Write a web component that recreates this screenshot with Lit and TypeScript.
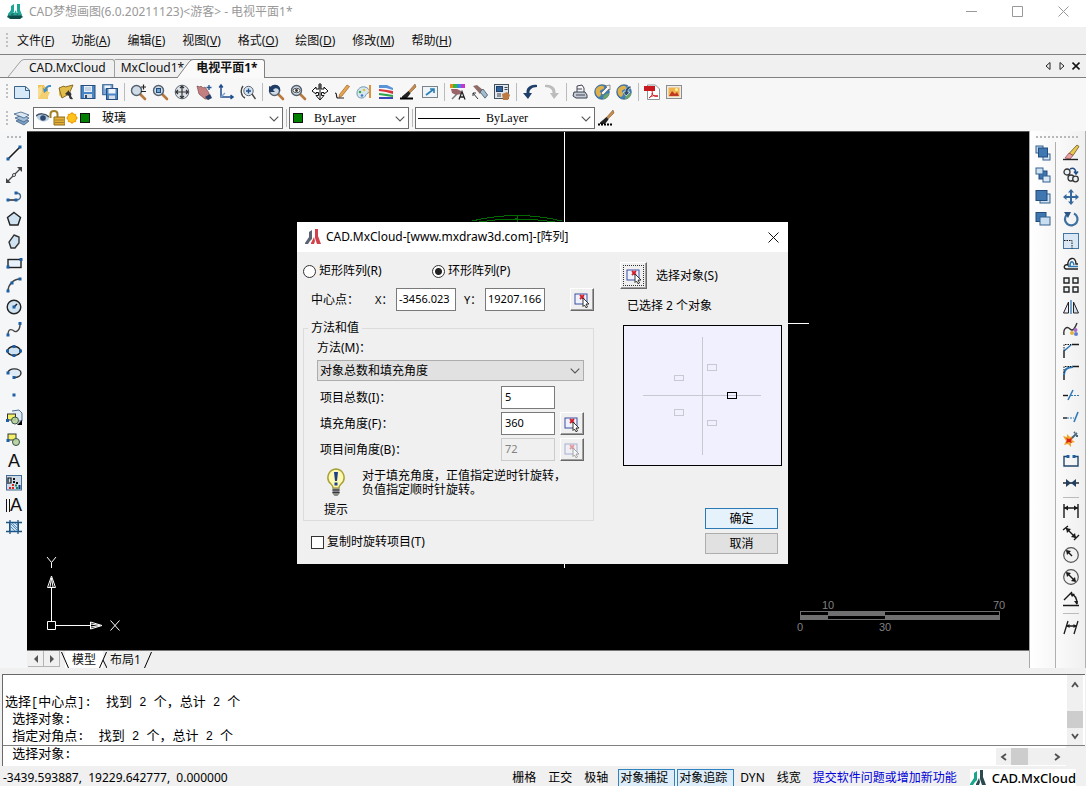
import { LitElement, html, svg, css } from "lit";
import { customElement } from "lit/decorators.js";

const B = "#1f4e8c";
const K = "#1a1a1a";
const box = (x: number, y: number, w: number, h: number, f: string, s = "#33608f") =>
  svg`<rect x=${x} y=${y} width=${w} height=${h} fill=${f} stroke=${s}/>`;
const line = (d: string, c = K, w = 1.4) => svg`<path d=${d} fill="none" stroke=${c} stroke-width=${w}/>`;
const fill = (d: string, c: string) => svg`<path d=${d} fill=${c}/>`;
const dot = (x: number, y: number) => svg`<rect x=${x - 1.5} y=${y - 1.5} width="3" height="3" fill="#1f5fa5"/>`;
const lens = (inner: unknown) => svg`
  <path d="M10.500 10.500L15 15" stroke="#b8793f" stroke-width="2.6" stroke-linecap="round"/>
  <circle cx="6.500" cy="6.500" r="5" fill="#cfdbe6" stroke="#54606c" stroke-width="1.4"/>${inner}`;
const brush = svg`<path d="M15 0L8 8l1.500 1.500L16 3z" fill="#c98a4b" stroke="#6b4a2a" stroke-width=".5"/>
  <path d="M8.500 7L2 12.500V14h5l3.500-4.500z" fill="#222"/>`;
const globe = svg`<circle cx="8" cy="8" r="7.300" fill="#3f7fb5" stroke="#2f5878" stroke-width=".7"/>
  <path d="M2 5c3-4 7-4 8-2 1 3-5 2-4 5 2 1 1 4-1 5-3-1-4-5-3-8z" fill="#e0b04a"/>
  <path d="M9 15c0-4 3-5 6-6 0 3-2 6-6 6z" fill="#6ba568"/>`;

const icons: Record<string, unknown> = {
  new: svg`<path d="M.5 2.500h11l4 3.500v8.500H.5z" fill="#d7e9f6" stroke="#3c6486"/>${line("M11.500 2.500v4h4", "#3c6486", 1)}`,
  open: svg`${fill("M2 1h6l1 2h3v12H2z", "#efc35a")}${fill("M2 4l4-2v10l-4 3z", "#f8dd91")}${fill("M6 8h8l-3 7H2z", "#f3cf72")}
    <path d="M15 1c-4 0-6 2-6 4L7 4l1 5 4-3-1-1c1-2 2-2 4-2z" fill="#3f8fca"/>`,
  saveas: svg`${fill("M1 4l5-2 1 1 8-2-4 9-7 4-3-3z", "#e2bd4b")}${line("M1 4l5-2 1 1 8-2-4 9-7 4z", "#8a6c25", 1)}
    <path d="M7 10l4-4v2c2 0 3 2 2 4l2 3c-3 1-4-1-4-3z" fill="#353535"/>`,
  save: svg`${box(1, 1.5, 14, 13, "#4a86c4", "#274e7d")}<rect x="4" y="2" width="8" height="6" fill="#e8f1fa"/>
    <path d="M5 4h6M5 6h6" stroke="#8fa9c4" stroke-width=".8"/><rect x="4" y="10" width="8" height="4" fill="#d9dee4"/><rect x="5" y="11" width="2" height="3" fill="#274e7d"/>`,
  saveall: svg`${box(.7, .7, 10, 10, "#7fa9d4", "#33608f")}<rect x="2.500" y="1.500" width="6" height="3" fill="#eef4fa"/>${box(4.5, 4.5, 11, 11, "#4a86c4", "#274e7d")}
    <rect x="6.500" y="5" width="7" height="4.500" fill="#eef4fa"/><rect x="7" y="11.500" width="6" height="3.500" fill="#d9dee4"/>`,
  zoompm: lens(line("M11 3h5M13.500 .5v5M11 7.500h5", "#222", 1.2)),
  zoomwin: lens(box(4.5, 4.5, 4, 4, "#6fa3d1", "#214b7a")),
  zoomext: svg`<circle cx="8" cy="8" r="6.800" fill="#dfe4ea" stroke="#596470"/>${line("M8 2v12M2 8h12M6 4l2-2 2 2M6 12l2 2 2-2M4 6L2 8l2 2M12 6l2 2-2 2", "#333", 1.2)}`,
  pan: svg`<path d="M1 2l3 1 1-1 2 2 2-1 4 6v6H9L3 10z" fill="#c47f80" stroke="#7b4a4c" stroke-width=".7"/><path d="M9 13l5-3 2 4-4 2z" fill="#263f66"/>${line("M10.500 3.500h5M13 1v5", "#28598f", 1.4)}`,
  ucs: svg`${line("M3 1v12h12M1.200 3.500L3 1l1.800 2.500M12.500 11.200L15 13l-2.500 1.800", B, 1.5)}${line("M3 13l4-4", "#7ca4cc")}`,
  orbit: svg`<circle cx="8.500" cy="7" r="4.700" fill="#d6e4ef" stroke="#596470"/>${line("M8.500 4.500v5M6 7h5", B, 1.4)}${line("M3 2C0 6 1 12 5 14M12 10l3.500 5", "#444")}`,
  zoomprev: svg`${lens("")}<path d="M1 2v6h6L5 6c2-3 6-2 7 2 2-6-5-10-9-5z" fill="#1f3d66"/>`,
  zoomrt: lens(svg`<ellipse cx="6.500" cy="6.500" rx="3.500" ry="2.200" fill="#fff" stroke="#333" stroke-width=".8"/><circle cx="6.500" cy="6.500" r="1.400" fill="#333"/>`),
  move4: svg`<path d="M7 0h2v5h3V3l4 4-4 3V8.500H9.500v3H12L8 16l-4-4.500h2.500v-3H4V10L0 7l4-4v2h3z" fill="#fff" stroke="#111"/>${line("M8 1v14", "#111", 1)}`,
  pencil: svg`<path d="M13 1l2.500 1.500L8 12l-3 1.500.5-3z" fill="#e4a94d" stroke="#a35c26" stroke-width=".7"/>${line("M1 9c3 0 0 5 3 5h6", "#222", 1.2)}`,
  palette: svg`<path d="M1 9c0-4 4-7 8-6s6 5 3 6-2 5-6 5-5-2-5-5z" fill="#d8e6f0" stroke="#7195b0"/><circle cx="4" cy="8" r="1.300" fill="#3cab4f"/><circle cx="8" cy="6" r="1.300" fill="#e0c23c"/><circle cx="6" cy="11.500" r="1.300" fill="#3f78c8"/><path d="M14 1v13" stroke="#dc9337" stroke-width="2"/>`,
  layers3: svg`${fill("M1 1l8 0 6 3v2L8 4H1z", "#5a94d8")}${fill("M1 5l8 1 6 1v3l-7-2-7-1z", "#d8343a")}${fill("M1 9l8 1 6 1v2l-7-1-7-1z", "#2da54c")}${fill("M1 13h14v2H1z", "#3c48b8")}`,
  brushline: svg`${brush}<path d="M0 14.500h13" stroke="#000" stroke-width="2"/>`,
  brushdash: svg`${brush}<path d="M0 14.500h15" stroke="#000" stroke-width="2" stroke-dasharray="2 1"/>`,
  resize: svg`${box(.5, 2.5, 15, 11, "#eef4f8", "#78838c")}${line("M4 11l8-6M8 5h4v4", "#2c7fb4", 1.6)}`,
  quick: svg`${fill("M0 0h3v4H0z", "#e82")}${fill("M3 0h4v4H3z", "#3b3")}${fill("M7 0h4v4H7z", "#38e")}${fill("M11 0h4v4h-4z", "#c3c")}
    ${fill("M1 5h6l4 2v3l-5 1-4-2z", "#9a6468")}${line("M2 15l5-5", "#777", 1.5)}<path d="M9 15.500l3-8 3 8M10 13h4" fill="none" stroke="#222" stroke-width="1.300"/>`,
  match: svg`${fill("M1 2l4-1 6 5-3 4z", "#8e6c68")}${fill("M8 8l3-3 5 6-3 4z", "#a4bcd0")}${line("M8 8l3-3 4.500 6-2.500 3z", "#4c5c6c", .8)}${line("M1 9l5 6M1 12V9h3", "#333", 1)}`,
  props: svg`${box(.5, .5, 14, 14, "#dfe6ed", "#44525f")}${box(2.5, 2.5, 6, 5, "#2d5f98", "#1f3f66")}${line("M10.500 3.500h3M10.500 5.500h3M3 10h4M3 12h4", "#444", 1)}${fill("M8 10l5-2 3 3-2 5H9z", "#bd7a42")}`,
  undo: svg`<path d="M15 1C8 0 4 4 4.500 9H1l5 6 4-6H7.500C7 6 10 3 15 3z" fill="#1f3f6b"/>`,
  redo: svg`<path d="M1 1c7-1 11 3 10.500 8H15l-5 6-4-6h2.500C9 6 6 3 1 3z" fill="#bcbcbc"/>`,
  print: svg`${line("M5 8V2l5-1 2 3v4", "#445", 1)}<path d="M2 8h11l2 3v3H4l-3-2z" fill="#c5ccd6" stroke="#38434f"/>${line("M4 11h9M5 5h5", "#445", 1)}`,
  web1: svg`${globe}<path d="M7 9l6-6-2-1 5-1v5l-1-1-6 6z" fill="#f4f4f4" stroke="#555" stroke-width=".6"/>`,
  web2: svg`${globe}<path d="M15 2c-4 0-6 3-6 6H7l3 4 4-4h-2c0-2 1-4 3-4z" fill="#2f5070" stroke="#fff" stroke-width=".6"/>`,
  pdf: svg`<path d="M3.500 1h8l4 4v10.500h-12z" fill="#fff" stroke="#8b9298"/>${fill("M0 2h11v5H0z", "#c9181e")}${line("M5 14c3-2 4-5 3-7M8 9c1 3 3 4 6 3M6 13c2-1 4-2 8-1", "#c9181e", 1)}`,
  image: svg`${box(.5, 1.5, 15, 13, "#ececec", "#8d8d8d")}${fill("M2.500 3.500h11v9h-11z", "#f0b24a")}${fill("M3 12l3-5 3 3 2-2 2 4z", "#bf3a24")}<circle cx="10.500" cy="5.500" r="1.500" fill="#fff2a0"/>`,
  layers: svg`<g stroke="#3c5f86" stroke-width=".8"><path d="M2 11l6-3 7 3-5 4z" fill="#7d9fc2"/><path d="M1 8l7-3 7 3-5 4z" fill="#a5bfd8"/><path d="M0 4l7-2 8 3-5 3z" fill="#dbe7f2"/></g>`,

  line: svg`${line("M2 14L14 2", K, 1.6)}${dot(2, 14)}${dot(14, 2)}`,
  xline: svg`${line("M1 15L15 1", "#444", 1.2)}${fill("M16 0v5l-5-5zM0 16v-5l5 5z", "#444")}<circle cx="8" cy="8" r="1.500" fill="#fff" stroke="#444"/>`,
  pline: svg`${line("M2 11h8", K)}${line("M10 11c6 0 6-7 0-7", "#4a6c90")}${dot(2, 11)}${dot(10, 11)}${dot(10, 4)}`,
  polygon: svg`<path d="M8 1.500l6.500 5L12 14H4L1.500 6.500z" fill="#cfe3f2" stroke="#222" stroke-width="1.400"/>`,
  shape: svg`<path d="M8 2l5 2v6l-4 5H5L3 9z" fill="#cfe3f2" stroke="#333" stroke-width="1.400"/>`,
  rect: svg`<rect x="2" y="4.500" width="13" height="8" fill="#e8f2fa" stroke="#222" stroke-width="1.400"/>${dot(2, 12)}${dot(15, 4.5)}`,
  arc: svg`${line("M2 14C2 8 7 2 14 2", "#444")}${dot(2, 14)}${dot(6, 6)}${dot(14, 2)}`,
  circle: svg`<circle cx="8" cy="8" r="6.800" fill="#cfe3f2" stroke="#222" stroke-width="1.400"/>${line("M8 8l3-3")}${dot(8, 8)}`,
  spline: svg`${line("M2 14c0-8 5-5 6-4s6 1 6-7", "#444")}${dot(2, 14)}${dot(14, 2.5)}`,
  ellipse: svg`<ellipse cx="8" cy="8" rx="6.500" ry="4.500" fill="#cfe3f2" stroke="#222" stroke-width="1.400"/>${dot(8, 3.5)}${dot(1.5, 8)}${dot(14.5, 8)}${dot(8, 12.5)}`,
  earc: svg`<path d="M2 8c0-6 13-5 13 0 0 3-3 4.500-7 4.500" fill="#dcebf6" stroke="#333" stroke-width="1.400"/>${dot(2, 8)}${dot(8, 12.5)}`,
  point: dot(8, 8),
  block: svg`<path d="M6 2l7-1 3 3v8h-5" fill="#dfeaf4" stroke="#4d6f92"/>${box(1.5, 5, 8, 6, "#f2ef69", "#333")}<circle cx="9" cy="11.500" r="3.500" fill="#b9cf9c" fill-opacity=".9" stroke="#354"/>${dot(1.5, 11.5)}${fill("M16 11v5h-5z", "#000")}`,
  insert: svg`${box(2, 3, 8, 6, "#f2ef69", "#333")}<circle cx="10" cy="11" r="3.500" fill="#b9cf9c" fill-opacity=".9" stroke="#354"/>${dot(2, 9.5)}`,
  hatch: svg`${box(.5, .5, 15, 14.5, "#cfdce8", "#456c94")}<path d="M2 9V3h3v5H3" fill="none" stroke="#111" stroke-width="1.200"/><g fill="#111"><path d="M7 3h2v2H7zM7 6h2v2H7zM10 7h2v2h-2z"/></g><g fill="#d22"><path d="M3 12h2v2H3zM6 9h2v2H6zM6 12h2v2H6z"/></g><g fill="#185"><path d="M9 9.500h2v2H9zM10 12h2v2h-2z"/></g><path d="M12.500 10h2v4h-2z" fill="#137"/>`,
  region: svg`${box(3.5, 3.5, 9, 9, "#cfe3f4", "#1f5583")}${line("M4 1v14M12 1v14M0 3.500h16M0 12.500h16", "#1f5583", 1.3)}${line("M4 7l5 5M6 4l6 6M4 4l8 8M9 4l3 3", "#4a86b8", .9)}`,

  front: svg`${box(1, 1, 7, 7, "#bcd5ea")}${box(8, 9, 7, 6, "#d9e8f4")}${box(3.5, 3, 9, 9, "#3f77b0", "#234d7c")}`,
  back: svg`${box(4, 4, 8, 8, "#3f77b0", "#234d7c")}${box(1, 1, 7, 6, "#d0e2f1")}${box(8, 9, 7, 6, "#d9e8f4")}`,
  above: svg`${box(5, 5, 10, 9, "#d0e2f1")}${box(1, 1.5, 11, 10, "#3f77b0", "#234d7c")}`,
  below: svg`${box(1, 1.5, 10, 9, "#3f77b0", "#234d7c")}${box(5, 6, 10, 8, "#c9def0")}`,
  erase: svg`<path d="M14 0l2 1.500-6 9-4-2z" fill="#e8c84d" stroke="#6b5726" stroke-width=".8"/><path d="M6 8l4 2.500L7 14l-5-1z" fill="#e8a0a4" stroke="#844" stroke-width=".7"/>${line("M0 14.500h15", "#222")}`,
  copy: svg`<g fill="#eaf0f5" stroke="#333" stroke-width="1.300"><circle cx="4" cy="5" r="3"/><circle cx="8" cy="11" r="3"/><circle cx="12.500" cy="12" r="2.800"/></g>${line("M7 2c4-2 6 1 6 4M11 4.500L13 7l2-2.500", B, 1.5)}`,
  move: svg`<path d="M8 0l3 3.500H9v3.500h3.500V5L16 8l-3.500 3V9H9v3.500h2L8 16l-3-3.500h2V9H3.500v2L0 8l3.500-3v2H7V3.500H5z" fill="#35699d"/>`,
  rotate: svg`${line("M4 3.500A6.300 6.300 0 1 0 11 2.500", "#3d6f9f", 2.2)}${fill("M1 1l7 0-3 6z", "#2a5687")}`,
  scale: svg`${box(.5, .5, 15, 15, "#d9e8f4", "#4475a3")}<path d="M1 7.500h8v8" fill="none" stroke="#111" stroke-dasharray="1.500 1"/>`,
  offset: svg`${line("M15 14H3c-3-1-2-5 2-4-1-7 8-10 8-1h2", "#222")}${line("M15 11.500H5M7 11c0-5 3-6 4-1", "#2f78b7", 1.5)}`,
  array: svg`<g fill="#eaf2f8" stroke="#222" stroke-width="1.400"><path d="M1 1h5v5H1zM10 1h5v5h-5zM1 10h5v5H1zM10 10h5v5h-5z"/></g>`,
  mirror: svg`<path d="M5.500 3v11h-5z" fill="#eef" stroke="#222"/><path d="M10.500 3v11h5z" fill="#cfdfee" stroke="#222"/>${line("M8 1v14", "#2f78b7", 1.3)}`,
  editspl: svg`${line("M1 14c-1-7 3-9 6-6s5-1 7-6", "#333")}<circle cx="9" cy="12" r="2" fill="#e2b43c"/><circle cx="12.500" cy="9" r="2" fill="#a86bc7"/><circle cx="13" cy="13" r="2" fill="#5f7fd2"/>`,
  chamfer: svg`${line("M1 15V8M9 1.500h7", K)}${line("M1 8l7.500-6.500", "#2f78b7", 1.6)}<path d="M1 8V1.500h7" fill="none" stroke="#111" stroke-dasharray="1.500 1"/>`,
  fillet: svg`${line("M1 15V9M9 1.500h7", K)}${line("M1 10c0-5 3-8 9-8", "#2f78b7", 2)}<path d="M1 8V1.500h7" fill="none" stroke="#111" stroke-dasharray="1.500 1"/>`,
  trim: svg`${line("M0 8.500h5", K)}${line("M5 13l5-10", "#2f78b7", 1.6)}<path d="M8 8.500h8" stroke="#2f78b7" stroke-dasharray="2 1"/>`,
  extend: svg`${line("M0 9h4", K)}${line("M11 13l4-10", "#2f78b7", 1.6)}<path d="M4 9h7" stroke="#2f78b7" stroke-dasharray="2 1"/>`,
  explode: svg`${fill("M0 5l4 1 0-3 3 3 4-1-2 4 3 2-4 1 0 4-3-3-4 1 2-4z", "#f0a52c")}${fill("M3 7l3 1 3-1-1 3 1 2-3-1-3 1 1-3z", "#d5221e")}${line("M9 7l5-5M11 1l1 1M15 5h-2", "#48657d", 1.8)}`,
  brk: svg`${line("M5 3.500H1v9.500h14V3.500h-4", "#23476c")}${dot(5, 3.5)}${dot(11, 3.5)}`,
  join: svg`${line("M0 8h16", K)}${fill("M3 4l5 4-5 4zM13 4L8 8l5 4z", "#233f60")}`,
  dimlin: svg`${line("M1 1v14M15 1v14M1 5h14", K)}${fill("M1 5l4-2.500v5zM15 5l-4-2.500v5z", K)}`,
  dimali: svg`${line("M0 5l5-4M11 15l5-5M3 3l10 10", K)}${fill("M3 3l5 1-4 4zM13 13l-5-1 4-4z", K)}`,
  dimrad: svg`<circle cx="8" cy="8" r="7.300" fill="#f2f2f2" stroke="#555" stroke-width="1.200"/>${line("M9 9L4 4", K)}${fill("M3 3l5 1-4 4z", K)}`,
  dimdia: svg`<circle cx="8" cy="8" r="7.300" fill="#f2f2f2" stroke="#555" stroke-width="1.200"/>${line("M4 4l8 8", K)}${fill("M3 3l5 1-4 4zM13 13l-5-1 4-4z", K)}`,
  dimang: svg`${line("M0 14.500h16M1 9l8-8M8 3c4 1 6 5 6 10", K)}${fill("M7 2l5 1-3 3zM14 14l-3-4h4z", K)}`,
  oblique: svg`${line("M1 15L5 2M11 15l4-13M4 7h9", K, 1.3)}${fill("M3.500 7l3-2v4zM13.500 7l-3-2v4z", K)}`,
};
const ico = (n: string) => html`<svg class="ico" viewBox="0 0 16 16" aria-hidden="true">${icons[n]}</svg>`;
const tool = (n: string) =>
  n === "|" ? html`<span class="sep"></span>`
    : html`<button class="tool" aria-label=${n}>${
        n === "text" ? html`<span class="glyph">A</span>`
        : n === "mtext" ? html`<span class="bars"></span><span class="glyph">A</span>`
        : ico(n)}</button>`;

const mxLogo = (a: string, b: string) => html`<svg class="logo" viewBox="0 0 16 16" aria-hidden="true">
  <path d="M4 3l3-2v9l-2 2-1-3zM0 14l4-6 1 4-2 3H0z" fill=${a}/><path d="M10 0h3v7l3 8h-4l-2-6zM6 14l3-6 1 4-1 3H6z" fill=${b}/></svg>`;
const pick = html`<svg class="ico" viewBox="0 0 16 16" aria-hidden="true">
  <rect x="1" y="2" width="12" height="10" fill="#eef2ff" stroke="#3a4fa0"/>
  <path d="M6 3l4 4M10 3L6 7" stroke="#d11f2a" stroke-width="1.800"/>
  <path d="M9 6l6 6h-3l1.500 3-1.500.8L10.500 13 9 14.500z" fill="#fff" stroke="#222" stroke-width=".9"/></svg>`;
const chev = html`<svg class="chev" viewBox="0 0 10 6" aria-hidden="true"><path d="M.7.7L5 5 9.300.7" fill="none" stroke="#555" stroke-width="1.100"/></svg>`;
const tri = (d: string) => html`<svg class="tri" viewBox="0 0 8 10" aria-hidden="true"><path d=${d} fill="currentColor" stroke="none"/></svg>`;

const top1 = "new open saveas save saveall | zoompm zoomwin zoomext pan ucs orbit | zoomprev zoomrt move4 pencil palette layers3 brushline resize | quick match props | undo redo | print web1 web2 | pdf image".split(" ");
const left = "line xline pline polygon shape rect arc circle spline ellipse earc point block insert text hatch mtext region".split(" ");
const rightA = "front back above below".split(" ");
const rightB = "erase copy move rotate scale offset array mirror editspl chamfer fillet trim extend explode brk join | dimlin dimali dimrad dimdia dimang | oblique".split(" ");
const menus = [["文件", "F"], ["功能", "A"], ["编辑", "E"], ["视图", "V"], ["格式", "O"], ["绘图", "D"], ["修改", "M"], ["帮助", "H"]];
const log = ["选择[中心点]:  找到 2 个，总计 2 个", " 选择对象:", " 指定对角点:  找到 2 个，总计 2 个"];

@customElement("array-dialog")
class ArrayDialog extends LitElement {
  static styles = css`
    * { box-sizing: border-box; }
    :host { display: block; width: 491px; background: #f0f0f0; color: #000;
      font: 12px/16px "Noto Sans", "Noto Sans CJK SC", sans-serif; }
    button, input, select { font: inherit; color: inherit; border-radius: 0; margin: 0; }
    .head { display: flex; align-items: center; height: 30px; padding-left: 8px; background: #fff; }
    .head h2 { flex: 1; margin: 0; padding-left: 5px; font-size: 12px; font-weight: 400; }
    .logo { width: 16px; height: 16px; }
    .close { width: 30px; height: 30px; border: 0; padding: 0; background: none; display: grid; place-items: center; }
    .close svg { width: 11px; height: 11px; }
    .body { display: flex; gap: 26px; padding: 10px 6px 10px; }
    .left { flex: 1; }
    .right { width: 162px; }
    .row { display: flex; align-items: center; }
    .kinds { height: 16px; margin-top: 1px; }
    .kinds label { display: flex; align-items: center; gap: 3px; width: 129px; }
    input[type="radio"] { appearance: none; width: 13px; height: 13px; border: 1px solid #333; border-radius: 50%; background: #fff; }
    input[type="radio"]:checked { background: radial-gradient(circle, #222 0 3px, #fff 4px); }
    input[type="checkbox"] { appearance: none; width: 13px; height: 13px; border: 1px solid #333; background: #fff; }
    .centre { margin-top: 9px; padding-left: 8px; }
    .centre .cap { width: 64px; }
    .centre .axis { width: 21px; white-space: nowrap; font-size: 11px; }
    .centre .num { width: 60px; margin-right: 8px; padding: 0 1px 3px 2px; }
    .num { height: 23px; width: 54px; padding: 0 3px 3px; border: 1px solid #7a7a7a; background: #fff; font-size: 11px; }
    .num:disabled { border-color: #ccc; background: #f0f0f0; color: #838383; }
    .pick { width: 24px; height: 23px; padding: 0; display: grid; place-items: center; background: #f0f0f0;
      border: 1px solid #fff; border-right-color: #696969; border-bottom-color: #696969; box-shadow: inset -1px -1px #a0a0a0; }
    .pick:disabled svg { opacity: .4; }
    .push { margin-left: auto; }
    .ico { width: 16px; height: 16px; }
    fieldset { margin: 9px 0 0; padding: 4px 9px 2px 13px; border: 1px solid #dcdcdc; min-width: 0; }
    legend { margin-left: -9px; padding: 0 3px; }
    .method { display: block; }
    .drop { position: relative; margin-top: 4px; }
    .drop select { appearance: none; width: 100%; height: 21px; padding: 0 2px; border: 1px solid #adadad; background: #e1e1e1; display: block; }
    .chev { position: absolute; right: 4px; top: 8px; width: 10px; height: 6px; pointer-events: none; }
    .fields { display: grid; grid-template-columns: 1fr 54px 24px; column-gap: 5px; row-gap: 3px; margin-top: 5px; align-items: center; }
    .fields label { padding-left: 3px; }
    .tip { display: flex; margin-top: 7px; gap: 14px; }
    .bulb { display: flex; flex-direction: column; align-items: center; gap: 5px; padding-left: 7px; }
    .bulb svg { width: 20px; height: 29px; }
    .tip p { margin: 1px 0 0; line-height: 14px; }
    .copy { display: flex; align-items: center; gap: 3px; margin: 13px 0 0 8px; }
    .choose { gap: 9px; }
    .choose .pick { width: 27px; height: 27px; outline: 1px dotted #333; outline-offset: -4px; }
    .chosen { margin: 9px 0 0 7px; }
    .preview { display: block; width: 159px; height: 141px; margin: 11px 0 0 3px; }
    .actions { display: flex; flex-direction: column; align-items: flex-end; gap: 4px; margin-top: 42px; padding-right: 4px; }
    .actions button { width: 73px; height: 21px; padding: 0; border: 1px solid #adadad; background: #e1e1e1; }
    .actions .ok { border-color: #2b79b5; background: #e5f1fb; }
  `;
  render() {
    return html`
      <div class="head">${mxLogo("#5c6472", "#d2414a")}<h2>CAD.MxCloud-[www.mxdraw3d.com]-[阵列]</h2>
        <button class="close" aria-label="关闭"><svg viewBox="0 0 11 11"><path d="M.5.5l10 10M10.500.5l-10 10" stroke="#111" fill="none"/></svg></button></div>
      <div class="body">
        <div class="left">
          <div class="row kinds">
            <label><input type="radio" name="kind">矩形阵列(R)</label>
            <label><input type="radio" name="kind" checked>环形阵列(P)</label>
          </div>
          <div class="row centre">
            <span class="cap">中心点：</span>
            <label class="axis" for="cx">X：</label><input class="num" id="cx" value="-3456.023">
            <label class="axis" for="cy">Y：</label><input class="num" id="cy" value="19207.166">
            <button class="pick push" aria-label="拾取中心点">${pick}</button>
          </div>
          <fieldset>
            <legend>方法和值</legend>
            <label class="method" for="method">方法(M)：</label>
            <div class="drop"><select id="method"><option>对象总数和填充角度</option></select>${chev}</div>
            <div class="fields">
              <label for="count">项目总数(I)：</label><input class="num" id="count" value="5"><span></span>
              <label for="sweep">填充角度(F)：</label><input class="num" id="sweep" value="360"><button class="pick" aria-label="拾取填充角度">${pick}</button>
              <label for="between">项目间角度(B)：</label><input class="num" id="between" value="72" disabled><button class="pick" aria-label="拾取项目间角度" disabled>${pick}</button>
            </div>
            <div class="tip">
              <div class="bulb">
                <svg viewBox="0 0 20 29" aria-hidden="true"><path d="M10 1a8.500 8.500 0 0 0-5 15c1.500 1.500 2 2 2 4h6c0-2 .5-2.500 2-4a8.500 8.500 0 0 0-5-15z" fill="#fdf9b5" stroke="#a9a23a" stroke-width="1.500"/>
                  <path d="M8 4h4l-1 9H9zM8.500 14.500h3v3h-3z" fill="#1e3f8a"/><path d="M6.500 20.500h7v5l-2 2.500h-3l-2-2.500z" fill="#888"/><path d="M6.500 22h7M6.500 24.500h7" stroke="#333"/></svg>
                <span>提示</span>
              </div>
              <p>对于填充角度，正值指定逆时针旋转，<br>负值指定顺时针旋转。</p>
            </div>
          </fieldset>
          <label class="copy"><input type="checkbox">复制时旋转项目(T)</label>
        </div>
        <div class="right">
          <div class="row choose"><button class="pick" id="choose">${pick}</button><label for="choose">选择对象(S)</label></div>
          <div class="chosen">已选择 2 个对象</div>
          <svg class="preview" viewBox="0 0 159 141" shape-rendering="crispEdges">
            <rect x=".5" y=".5" width="158" height="140" fill="#f0f0ff" stroke="#000"/>
            <path d="M79.500 12v118M20 70.500h118" stroke="#c8c8d2" fill="none"/>
            <g fill="none" stroke="#c8c8d2"><path d="M84.500 39.500h9v6h-9zM51.500 50.500h9v5h-9zM51.500 84.500h9v6h-9zM84.500 95.500h9v5h-9z"/></g>
            <rect x="104.500" y="67.500" width="9" height="6" fill="#f0f0ff" stroke="#000"/><path d="M105 70.500h8" stroke="#c8c8d2"/>
          </svg>
          <div class="actions"><button class="ok">确定</button><button>取消</button></div>
        </div>
      </div>`;
  }
}

@customElement("app-root")
class AppRoot extends LitElement {
  static styles = css`
    * { box-sizing: border-box; }
    :host { display: flex; flex-direction: column; position: relative; height: 100vh; overflow: hidden; background: #f0f0f0; color: #111;
      font: 12px/16px "Noto Sans", "Noto Sans CJK SC", sans-serif; }
    button, select, input { font: inherit; color: inherit; margin: 0; border-radius: 0; }
    button { border: 0; padding: 0; background: none; }
    .ico { width: 16px; height: 16px; display: block; overflow: visible; }
    .logo { width: 16px; height: 16px; }
    .title { display: flex; align-items: center; height: 27px; padding: 0 0 4px 7px; background: #fff; color: #999; }
    .title h1 { flex: 1; margin: 0; padding-left: 6px; font-size: 12px; font-weight: 400; }
    .title button { width: 46px; height: 23px; display: grid; place-items: center; }
    .title button svg { width: 11px; height: 11px; }
    .grip { width: 2px; height: 15px; margin: 0 4px 0 6px; background: repeating-linear-gradient(#c0c0c0 0 2px, transparent 2px 4px); }
    .menu { display: flex; align-items: center; height: 28px; border-bottom: 1px solid #808080; }
    .menu nav { display: flex; gap: 17px; padding-left: 5px; }
    .tabs { display: flex; align-items: flex-end; height: 23px; padding-left: 8px; border-bottom: 1px solid #808080; }
    .tab { display: flex; height: 18px; }
    .tab svg { width: 16px; height: 18px; display: block; }
    .tab span { height: 18px; padding: 0 8px 0 5px; border: solid #a0a0a0; border-width: 1px 1px 0 0; border-top-right-radius: 3px; }
    .tab.second span { padding: 0 16px 0 6px; border-right: 0; border-radius: 0; }
    .tab.active { margin: 0 0 -1px -23px; }
    .tab.active, .tab.active span, .tab.active svg { height: 19px; }
    .tab.active span { background: #fafafa; border-color: #808080; border-right-width: 1px; font-weight: 700; padding: 0 6px 0 3px; }
    .tabctl { margin-left: auto; display: flex; gap: 6px; align-items: center; height: 22px; padding-right: 6px; }
    .tri { width: 8px; height: 10px; display: block; }
    .bar { display: flex; align-items: center; height: 27px; background: #f7f7f8; }
    .bar .grip { margin-right: 3px; }
    .bar.second { height: 26px; }
    .tool { display: flex; align-items: center; justify-content: center; width: 22px; height: 22px; flex: none; }
    .sep { width: 6px; height: 18px; flex: none; background: linear-gradient(#bbb, #bbb) center / 1px 100% no-repeat; }
    .combo { position: relative; height: 22px; }
    .combo select { appearance: none; display: block; width: 100%; height: 22px; border: 1px solid #6e6e6e; background: #fff;
      font-family: "Liberation Serif", "Noto Sans CJK SC", serif; color: #000; }
    .marks { position: absolute; left: 3px; top: 3px; display: flex; align-items: center; height: 16px; pointer-events: none; }
    .chev { position: absolute; right: 4px; top: 9px; width: 10px; height: 6px; pointer-events: none; }
    .layer { width: 250px; }
    .layer select { padding: 0 20px 0 68px; }
    .colour { width: 120px; }
    .colour select { padding: 0 20px 0 21px; }
    .ltype { width: 180px; }
    .ltype select { padding: 0 20px 0 67px; }
    .sw { width: 10px; height: 10px; margin: 0 1px; background: #008000; border: 1px solid #111; }
    .stroke { width: 62px; height: 1px; background: #000; margin-top: 1px; }
    .main { display: flex; flex: 1; min-height: 0; }
    .side { display: flex; flex-direction: column; align-items: center; width: 27px; padding-left: 1px; background: #f5f6f8; }
    .hgrip { width: 14px; height: 2px; margin: 5px 0 4px; flex: none; background: repeating-linear-gradient(90deg, #b8b8b8 0 2px, transparent 2px 4px); }
    .glyph { font: 18px/20px "Liberation Sans", sans-serif; color: #111; }
    .bars { width: 4px; height: 13px; border: solid #111; border-width: 0 1px; }
    .centre { display: flex; flex-direction: column; flex: 1; min-width: 0; }
    .canvas { position: relative; flex: 1; overflow: hidden; background: #000; border-top: 1px solid #555; border-bottom: 1px solid #777; }
    .drawing { position: absolute; left: 0; top: 0; width: 1002px; height: 518px; }
    .ucs { position: absolute; left: 18px; bottom: 0; width: 80px; height: 96px; }
    .scale { position: absolute; right: 22px; bottom: 15px; width: 214px; height: 38px; font: 11px "Liberation Sans", sans-serif; }
    .sheets { display: flex; height: 17px; padding-left: 1px; }
    .sheets .step { width: 16px; height: 16px; display: grid; place-items: center; border: 1px solid #b4b4b4; border-width: 0 1px 1px 0; color: #555; }
    .sheet { display: flex; height: 17px; align-items: center; line-height: 16px; }
    .sheet svg { width: 8px; height: 16px; display: block; }
    .sheet span { padding: 0 3px; }
    .sheet.on { background: linear-gradient(90deg, transparent 4px, #fff 4px calc(100% - 4px), transparent 0); margin-left: 1px; }
    .right { width: 57px; border-left: 1px solid #a8a8a8; border-right: 1px solid #b0b0b0; display: flex; flex-direction: column; align-items: center; background: linear-gradient(90deg, #fff, #f7f7f7 25px, #fafafa 26px, #f0f0f0); }
    .right .hgrip { width: 43px; }
    .cols { display: flex; flex: 1; align-self: stretch; }
    .cols .colA { width: 26px; border-right: 1px solid #b0b0b0; }
    .cols .colB { width: 29px; }
    .cols > div { display: flex; flex-direction: column; align-items: center; }
    .colB .sep { width: 16px; height: 6px; background: linear-gradient(#bbb, #bbb) center / 100% 1px no-repeat; }
    .command { margin: 6px 1px 0 2px; border: solid #696969; border-width: 1px 0 0 1px; background: #fff; }
    .log { display: flex; height: 71px; border-bottom: 1px solid #808080; }
    .lines { flex: 1; padding: 19px 0 0 2px; }
    .lines div, .entry label { height: 17px; line-height: 17px; white-space: pre; color: #000; font-size: 12px; font-family: "Liberation Mono", "Noto Sans CJK SC", monospace; }
    .han { font-size: 13px; }
    .vbar { width: 16px; margin-right: 2px; background: #f0f0f0; display: flex; flex-direction: column; align-items: center; padding: 6px 0 5px; }
    .vthumb { width: 16px; height: 17px; background: #cdcdcd; margin: 22px 0 auto; }
    .arrow { width: 8px; height: 8px; display: block; }
    .entry { display: flex; height: 20px; padding-left: 2px; }
    .entry input { flex: 1; border: 0; background: none; outline: 0; padding: 0; }
    .hbar { display: flex; align-items: center; width: 70px; height: 17px; margin-top: 2px; padding: 0 5px 0 4px; background: #f0f0f0; }
    .hthumb { width: 17px; height: 17px; margin: 0 auto 0 3px; background: #cdcdcd; }
    .corner { width: 19px; background: #f0f0f0; }
    .status { display: flex; align-items: center; height: 20px; padding: 3px 10px 0 3px; color: #000; }
    .coords { flex: 1; white-space: pre; }
    .modes { display: flex; height: 18px; align-items: center; }
    .modes button { height: 18px; padding: 0 6px; white-space: nowrap; }
    .modes .on { padding: 0 6px 0 1px; margin-left: 2px; border: 1px solid #2f83bf; border-bottom: 0; background: #dcecf8; }
    .modes .on.first { margin-left: 4px; }
    .status a { color: #0000d8; padding: 0 13px 0 6px; white-space: nowrap; text-decoration: none; }
    .brand { display: flex; align-items: center; gap: 6px; height: 18px; background: #fff; font-size: 13px; font-weight: 500; }
    .overlay { position: absolute; inset: 0 1px 0 0; display: grid; place-items: center; }
  `;

  han(text: string) {
    return text.split(/([\u3000-\uffef]+)/).map((part, n) => (n % 2 ? html`<span class="han">${part}</span>` : part));
  }
  arrow(d: string) {
    return html`<svg class="arrow" viewBox="0 0 8 8" aria-hidden="true"><path d=${d} fill="none" stroke="#505050" stroke-width="1.800"/></svg>`;
  }

  render() {
    return html`
      <header class="title">
        <svg class="logo" viewBox="0 0 16 16" aria-hidden="true"><path d="M0 13l2-4h11l3 4-3 2H3z" fill="#1d6f68"/><path d="M4 2l3-2v8l-2 2-1-3zM1 10l3-4 1 3-2 3zM10 0h3v6l2 5h-4l-1-4zM6 11l3-5 1 5z" fill="#1fa595"/><path d="M1 12h14l-2 3H4z" fill="#0d4c48"/></svg>
        <h1>CAD梦想画图(6.0.20211123)&lt;游客&gt; - 电视平面1*</h1>
        <button aria-label="最小化"><svg viewBox="0 0 11 11"><path d="M0 5.500h11" stroke="#999"/></svg></button>
        <button aria-label="最大化"><svg viewBox="0 0 11 11"><path d="M.5.5h10v10H.5z" fill="none" stroke="#999"/></svg></button>
        <button aria-label="关闭"><svg viewBox="0 0 11 11"><path d="M.5.5l10 10M10.500.5l-10 10" stroke="#999"/></svg></button>
      </header>
      <div class="menu"><span class="grip"></span><nav>${menus.map(([t, k]) => html`<button>${t}(<u>${k}</u>)</button>`)}</nav></div>
      <div class="tabs">
        <button class="tab"><svg viewBox="0 0 16 18"><path d="M0 18L12 3Q14 .5 16 .5" fill="none" stroke="#a0a0a0"/></svg><span>CAD.MxCloud</span></button>
        <button class="tab second"><span>MxCloud1*</span></button>
        <button class="tab active"><svg viewBox="0 0 16 19"><path d="M0 19L12 3Q14 .5 16 .5V19z" fill="#fafafa"/><path d="M0 19L12 3Q14 .5 16 .5" fill="none" stroke="#808080"/></svg><span>电视平面1*</span></button>
        <div class="tabctl">
          <button aria-label="上一个"><svg class="tri" viewBox="0 0 8 10"><path d="M6 1.500v7L2 5z" fill="none" stroke="#222"/></svg></button>
          <button aria-label="下一个"><svg class="tri" viewBox="0 0 8 10"><path d="M2 1.500v7L6 5z" fill="none" stroke="#222"/></svg></button>
          <button aria-label="关闭标签"><svg class="tri" viewBox="0 0 8 10"><path d="M.5 1.500l7 7M7.500 1.500l-7 7" stroke="#111" stroke-width="1.600"/></svg></button>
        </div>
      </div>
      <div class="bar"><span class="grip"></span>${top1.map(tool)}</div>
      <div class="bar second"><span class="grip"></span>${tool("layers")}
        <div class="combo layer"><select aria-label="图层"><option>玻璃</option></select>
          <span class="marks">
            <svg width="13" height="16" viewBox="0 0 13 16"><path d="M0 6c3-3 8-3 12 0l1 3c-4 4-9 3-12-1z" fill="#b9cfe0"/><path d="M0 6c3-3 9-3 13 1" fill="none" stroke="#44566b" stroke-width="1.500"/><circle cx="7" cy="8" r="2.800" fill="#2f4a70"/></svg>
            <svg width="16" height="16" viewBox="0 0 16 16"><path d="M1.500 8V4c0-4 7-4 7 0v4" fill="none" stroke="#a5802b" stroke-width="2"/><path d="M5 7h11v8H5z" fill="#e3ae35" stroke="#8e6a1b"/><path d="M6 10h9M6 12.500h9" stroke="#a5802b"/></svg>
            <svg width="14" height="16" viewBox="0 0 14 16"><path d="M7 2v12M1 8h12M3 4l8 8M11 4l-8 8" stroke="#f3a91c" stroke-width="1.200"/><circle cx="7" cy="8" r="4.500" fill="#ffc21a" stroke="#e79a10"/></svg>
            <span class="sw"></span></span>${chev}</div>
        <span class="sep"></span>
        <div class="combo colour"><select aria-label="颜色"><option>\u00a0ByLayer</option></select><span class="marks"><span class="sw"></span></span>${chev}</div>
        <span class="sep"></span>
        <div class="combo ltype"><select aria-label="线型"><option>\u00a0ByLayer</option></select><span class="marks"><span class="stroke"></span></span>${chev}</div>
        ${tool("brushdash")}
      </div>
      <main class="main">
        <div class="side"><span class="hgrip"></span>${left.map(tool)}</div>
        <div class="centre">
          <div class="canvas">
            <svg class="drawing" viewBox="0 0 1002 518" shape-rendering="crispEdges" aria-hidden="true">
              <path d="M445 89Q490 78 535 89M452 90Q490 84 528 90M490.500 83v8" fill="none" stroke="#006a00"/>
              <path d="M537.500 0v436M292 191.500h490" stroke="#fff" fill="none"/>
            </svg>
            <svg class="ucs" viewBox="0 0 80 96" fill="none" stroke="#fff" aria-hidden="true">
              <path d="M2.500 67.500h8v8h-8zM6.500 67V34M2.500 33.500h8L6.500 22zM5 33l1.500-9L8 33M11 71.500h35M45.500 68v7L57 71.500zM46 70l9 1.500-9 1.500"/>
              <path d="M65.500 66.500l9 10M74.500 66.500l-9 10M2 3l4.500 5.500L11 3M6.500 8.500V14"/>
            </svg>
            <svg class="scale" viewBox="0 0 214 38" aria-hidden="true">
              <g shape-rendering="crispEdges"><path d="M7.500 14.500h199v8h-199z" fill="none" stroke="#707070"/><path d="M8 18h27v4H8zM35 15h57v4H35zM92 18h115v4H92z" fill="#707070"/></g>
              <g fill="#808080" text-anchor="middle"><text x="35" y="12">10</text><text x="206" y="12">70</text><text x="7" y="34">0</text><text x="92" y="34">30</text></g>
            </svg>
          </div>
          <div class="sheets">
            <button class="step" aria-label="向左">${tri("M6 1v8L2 5z")}</button><button class="step" aria-label="向右">${tri("M2 1v8l4-4z")}</button>
            <button class="sheet on"><svg viewBox="0 0 8 16"><path d="M.5 0l7 16" stroke="#000"/></svg><span>模型</span><svg viewBox="0 0 8 16"><path d="M7.500 0l-7 16M4 8l4 8" stroke="#000"/></svg></button>
            <button class="sheet"><span>布局1</span><svg viewBox="0 0 8 16"><path d="M7.500 0l-7 16" stroke="#000"/></svg></button>
          </div>
        </div>
        <div class="right"><span class="hgrip"></span>
          <div class="cols"><div class="colA">${rightA.map(tool)}</div><div class="colB">${rightB.map(tool)}</div></div>
        </div>
      </main>
      <section class="command">
        <div class="log"><div class="lines">${log.map((l) => html`<div>${this.han(l)}</div>`)}</div>
          <div class="vbar">${this.arrow("M1 6l3-4 3 4")}<span class="vthumb"></span>${this.arrow("M1 2l3 4 3-4")}</div></div>
        <div class="entry"><label for="cmd">${this.han(" 选择对象:")}</label><input id="cmd">
          <div class="hbar">${this.arrow("M6 1L2 4l4 3")}<span class="hthumb"></span>${this.arrow("M2 1l4 3-4 3")}</div><span class="corner"></span></div>
      </section>
      <footer class="status">
        <span class="coords">-3439.593887,  19229.642777,  0.000000</span>
        <div class="modes"><button>栅格</button><button>正交</button><button>极轴</button><button class="on first">对象捕捉</button><button class="on">对象追踪</button><button>DYN</button><button>线宽</button></div>
        <a href="#">提交软件问题或增加新功能</a>
        <span class="brand">${mxLogo("#18a58c", "#2a4a50")}CAD.MxCloud</span>
      </footer>
      <div class="overlay"><array-dialog></array-dialog></div>`;
  }
}
